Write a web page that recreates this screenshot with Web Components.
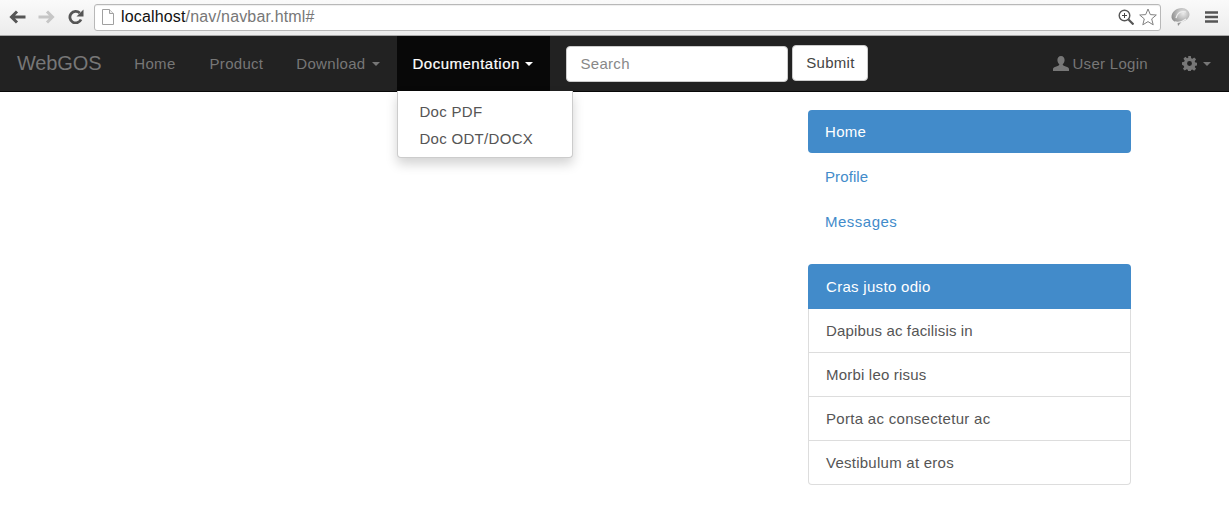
<!DOCTYPE html>
<html>
<head>
<meta charset="utf-8">
<title>WebGOS</title>
<style>
  html, body { margin: 0; height: 100%; overflow: hidden; background: #fff; }
  body { font-family: "Liberation Sans", Arial, sans-serif; font-size: 15px; letter-spacing: .3px; }
  .page { display: flex; justify-content: flex-end; padding: 18px 98px 0 0; }
</style>
</head>
<body>
<browser-bar url-host="localhost" url-path="/nav/navbar.html#"></browser-bar>
<app-navbar>
  <nav-link>Home</nav-link>
  <nav-link>Product</nav-link>
  <nav-link style="margin-left:-1px" caret>Download</nav-link>
  <nav-menu label="Documentation">
    <menu-entry>Doc PDF</menu-entry>
    <menu-entry>Doc ODT/DOCX</menu-entry>
  </nav-menu>
</app-navbar>
<div class="page">
  <side-column>
    <pill-nav>
      <pill-item active>Home</pill-item>
      <pill-item style="letter-spacing:.1px">Profile</pill-item>
      <pill-item style="letter-spacing:.5px">Messages</pill-item>
    </pill-nav>
    <list-panel heading="Cras justo odio">
      <list-row style="letter-spacing:.15px">Dapibus ac facilisis in</list-row>
      <list-row style="letter-spacing:.2px">Morbi leo risus</list-row>
      <list-row>Porta ac consectetur ac</list-row>
      <list-row style="letter-spacing:.25px">Vestibulum at eros</list-row>
    </list-panel>
  </side-column>
</div>

<script>
function makeShadow(el, html) {
    el.attachShadow({mode: 'open'});
    const template = document.createElement('template');
    template.innerHTML = html.trim();
    el.shadowRoot.append(template.content.cloneNode(true));
}

class BrowserBar extends HTMLElement {
    constructor() {
        super();
        makeShadow(this, `
            <style>
              :host { display: flex; align-items: center; height: 35px; border-bottom: 1px solid #a8a8a8; background: linear-gradient(#fafafa, #ececec); letter-spacing: 0; }
              svg { display: block; flex: none; }
              .nav { display: flex; align-items: center; padding: 0 10px 2px 9px; }
              .nav svg + svg { margin-left: 12px; }
              .url { box-sizing: border-box; width: 1067px; height: 27px; margin-bottom: 1px; display: flex; align-items: center; background: #fff; border: 1px solid #b8b8b8; border-radius: 3px; padding: 0 3px 0 7px; font-size: 16px; letter-spacing: .16px; box-shadow: inset 0 1px 1px #eee; }
              .host { color: #111; margin-left: 7px; }
              .path { color: #777; flex: 1; }
              .right { display: flex; align-items: center; padding: 0 11px 2px 10px; gap: 15px; }
            </style>
            <div class="nav">
              <svg width="17" height="14" viewBox="0 0 17 14"><path d="M16.500 7H3M8 1.500 2.500 7 8 12.500" fill="none" stroke="#555" stroke-width="3"/></svg>
              <svg width="17" height="14" viewBox="0 0 17 14"><path d="M.5 7H14M9 1.500 14.500 7 9 12.500" fill="none" stroke="#c6c6c6" stroke-width="3"/></svg>
              <svg style="margin-left:13px" width="16" height="15" viewBox="0 0 16 15"><path d="M13 10.500A5.800 5.800 0 1 1 11.800 4" fill="none" stroke="#555" stroke-width="2.800"/><path d="M15.500 .5V7.500H8.500z" fill="#555"/></svg>
            </div>
            <div class="url">
              <svg width="12" height="16" viewBox="0 0 12 16"><path d="M.5.5h7l4 4v11H.5z" fill="#fff" stroke="#a0a0a0"/><path d="M7.500.5v4h4" fill="#eee" stroke="#a0a0a0"/></svg>
              <span class="host"></span><span class="path"></span>
              <svg width="16" height="16" viewBox="0 0 16 16"><circle cx="6.500" cy="6.500" r="5.300" fill="#fff" stroke="#555" stroke-width="1.400"/><path d="M4 6.500h5M6.500 4v5" stroke="#444"/><path d="m10.500 10.500 5 5" stroke="#555" stroke-width="2.200"/></svg>
              <svg style="margin-left:5px" width="18" height="18" viewBox="0 0 18 18"><path d="m9 1 2.300 5.600 6 .4-4.600 3.900 1.500 5.900L9 13.600l-5.200 3.200 1.500-5.900L.7 7l6-.4z" fill="#fff" stroke="#808080"/></svg>
            </div>
            <div class="right">
              <svg width="19" height="20" viewBox="0 0 19 20"><defs><radialGradient id="g" cx=".65" cy=".3" r=".8"><stop offset="0" stop-color="#eaeaea"/><stop offset=".6" stop-color="#a8a8a8"/><stop offset="1" stop-color="#808080"/></radialGradient></defs><path d="M11 1c4 0 7.500 3 7.500 6.500S15 14 11 14.500L7 19l-.5-3.500C3 15 .5 12.500.5 10 .5 5 5 1 11 1z" fill="url(#g)"/><path d="M5 11C6 6 10 3.500 15 5M4 15c4 1 8-.5 11-3" fill="none" stroke="#eee" stroke-width="1.300"/></svg>
              <svg width="13" height="12" viewBox="0 0 13 12"><path d="M0 1.500h13M0 6h13M0 10.500h13" stroke="#555" stroke-width="2.600"/></svg>
            </div>
        `);
        this.shadowRoot.querySelector('.host').textContent = this.getAttribute('url-host');
        this.shadowRoot.querySelector('.path').textContent = this.getAttribute('url-path');
    }
}
customElements.define('browser-bar', BrowserBar);

class AppNavbar extends HTMLElement {
    constructor() {
        super();
        makeShadow(this, `
            <style>
              :host { display: flex; align-items: stretch; height: 55px; background: #222; border-bottom: 1px solid #080808; color: #777; }
              .brand { font-size: 20px; letter-spacing: -.15px; padding: 0 16px 0 17px; line-height: 55px; }
              form { display: flex; align-items: center; gap: 4px; margin: 0 0 1px 16px; }
              .search { box-sizing: border-box; width: 222px; height: 36px; margin-top: 1px; background: #fff; border: 1px solid #ccc; border-radius: 4px; color: #888; padding: 0 13px; line-height: 34px; }
              .submit { box-sizing: border-box; width: 76px; height: 36px; margin-top: -1px; background: #fff; border: 1px solid #ccc; border-radius: 4px; color: #444; text-align: center; line-height: 33px; }
              .right { margin-left: auto; display: flex; align-items: center; padding-right: 18px; }
              .login { display: flex; align-items: center; gap: 3px; margin-right: 34px; }
              .gear { display: flex; align-items: center; gap: 6px; }
              .caret { width: 0; height: 0; border: 4px solid transparent; border-top-color: currentColor; border-bottom: 0; }
              svg { display: block; }
            </style>
            <div class="brand">WebGOS</div>
            <slot></slot>
            <form>
              <div class="search">Search</div>
              <div class="submit">Submit</div>
            </form>
            <div class="right">
              <div class="login">
                <svg width="16" height="15" viewBox="0 0 16 15"><path d="M8 0c2.300 0 3.600 1.800 3.600 4 0 1.800-.9 3.500-1.900 4.300 0 1.200 1 1.500 3 2.200 2 .7 3.300 1.200 3.300 2.500V15H0v-2c0-1.300 1.300-1.800 3.300-2.500s3-1 3-2.200C5.300 7.500 4.400 5.800 4.400 4 4.400 1.800 5.700 0 8 0z" fill="#777"/></svg>
                <span>User Login</span>
              </div>
              <div class="gear">
                <svg width="15" height="15" viewBox="0 0 16 16"><path fill="#777" fill-rule="evenodd" d="M6.600 0h2.800l.4 2.300 1.300.6L13 1.500l2 2-1.400 2 .6 1.300 2.300.4v2.800l-2.300.4-.6 1.300 1.400 2-2 2-2-1.400-1.300.6-.4 2.100H6.600l-.4-2.300-1.300-.6-2 1.400-1.900-1.900 1.400-2-.6-1.300L0 9.400V6.600l2.300-.4.600-1.300-1.400-2 2-2 2 1.400 1.300-.6zM8 5.400a2.600 2.600 0 1 0 0 5.200 2.600 2.600 0 0 0 0-5.200z"/></svg>
                <span class="caret"></span>
              </div>
            </div>
        `);
    }
}
customElements.define('app-navbar', AppNavbar);

class NavLink extends HTMLElement {
    constructor() {
        super();
        makeShadow(this, `
            <style>
              :host { display: flex; align-items: center; gap: 7px; padding: 0 17px; color: #777; }
              .caret { width: 0; height: 0; border: 4px solid transparent; border-top-color: currentColor; border-bottom: 0; }
            </style>
            <slot></slot>
        `);
        if (this.hasAttribute('caret')) {
            const caret = document.createElement('span');
            caret.classList.add('caret');
            this.shadowRoot.append(caret);
        }
    }
}
customElements.define('nav-link', NavLink);

class NavMenu extends HTMLElement {
    constructor() {
        super();
        makeShadow(this, `
            <style>
              :host { display: flex; position: relative; box-sizing: border-box; width: 153px; align-items: center; gap: 5px; padding-left: 15px; background: #080808; color: #fff; letter-spacing: .5px; -webkit-text-stroke: .2px #fff; }
              .caret { width: 0; height: 0; border: 4px solid transparent; border-top-color: currentColor; border-bottom: 0; }
              .menu { position: absolute; left: 0; top: 55px; width: 176px; box-sizing: border-box; height: 67px; padding: 7px 0 5px; background: #fff; border: 1px solid #ccc; border-top: 0; border-radius: 0 0 4px 4px; box-shadow: 0 6px 12px rgba(0,0,0,.175); color: #555; letter-spacing: .3px; -webkit-text-stroke: 0; z-index: 5; }
            </style>
            <span class="label"></span><span class="caret"></span>
            <div class="menu"><slot></slot></div>
        `);
        this.shadowRoot.querySelector('.label').textContent = this.getAttribute('label');
    }
}
customElements.define('nav-menu', NavMenu);

class MenuEntry extends HTMLElement {
    constructor() {
        super();
        makeShadow(this, `
            <style>
              :host { display: block; padding: 0 21px; height: 27px; line-height: 27px; white-space: nowrap; color: #555; }
            </style>
            <slot></slot>
        `);
    }
}
customElements.define('menu-entry', MenuEntry);

class SideColumn extends HTMLElement {
    constructor() {
        super();
        makeShadow(this, `
            <style>
              :host { display: flex; flex-direction: column; gap: 21px; width: 323px; }
            </style>
            <slot></slot>
        `);
    }
}
customElements.define('side-column', SideColumn);

class PillNav extends HTMLElement {
    constructor() {
        super();
        makeShadow(this, `
            <style>
              :host { display: flex; flex-direction: column; gap: 2px; }
            </style>
            <slot></slot>
        `);
    }
}
customElements.define('pill-nav', PillNav);

class PillItem extends HTMLElement {
    constructor() {
        super();
        makeShadow(this, `
            <style>
              :host { display: block; height: 43px; line-height: 43px; padding: 0 17px; border-radius: 4px; color: #428bca; }
              :host([active]) { background: #428bca; color: #fff; }
            </style>
            <slot></slot>
        `);
    }
}
customElements.define('pill-item', PillItem);

class ListPanel extends HTMLElement {
    constructor() {
        super();
        makeShadow(this, `
            <style>
              :host { display: block; }
              .head { height: 45px; line-height: 45px; padding: 0 18px; border-radius: 4px 4px 0 0; background: #428bca; color: #fff; }
              .rows { border: 1px solid #ddd; border-top: 0; border-radius: 0 0 4px 4px; }
            </style>
            <div class="head"></div>
            <div class="rows"><slot></slot></div>
        `);
        this.shadowRoot.querySelector('.head').textContent = this.getAttribute('heading');
    }
}
customElements.define('list-panel', ListPanel);

class ListRow extends HTMLElement {
    constructor() {
        super();
        makeShadow(this, `
            <style>
              :host { display: block; height: 43px; line-height: 43px; padding: 0 17px; color: #555; border-bottom: 1px solid #ddd; }
              :host(:last-child) { border-bottom: 0; }
            </style>
            <slot></slot>
        `);
    }
}
customElements.define('list-row', ListRow);
</script>
</body>
</html>
